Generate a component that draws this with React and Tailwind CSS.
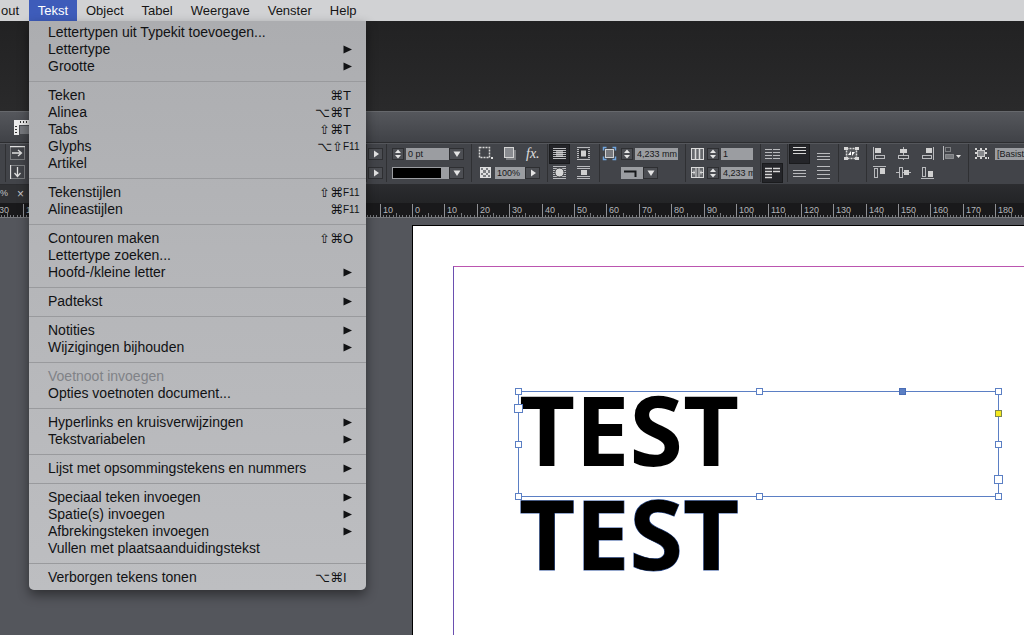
import React from 'react';

const MENUS_AFTER = ['Object', 'Tabel', 'Weergave', 'Venster', 'Help'];

// sub: opent een submenu, mods + keyName: sneltoets
const MENU_GROUPS = [
  [
    { label: 'Lettertypen uit Typekit toevoegen...' },
    { label: 'Lettertype', sub: true },
    { label: 'Grootte', sub: true },
  ],
  [
    { label: 'Teken', mods: '⌘', keyName: 'T' },
    { label: 'Alinea', mods: '⌥⌘', keyName: 'T' },
    { label: 'Tabs', mods: '⇧⌘', keyName: 'T' },
    { label: 'Glyphs', mods: '⌥⇧', keyName: 'F11' },
    { label: 'Artikel' },
  ],
  [
    { label: 'Tekenstijlen', mods: '⇧⌘', keyName: 'F11' },
    { label: 'Alineastijlen', mods: '⌘', keyName: 'F11' },
  ],
  [
    { label: 'Contouren maken', mods: '⇧⌘', keyName: 'O' },
    { label: 'Lettertype zoeken...' },
    { label: 'Hoofd-/kleine letter', sub: true },
  ],
  [{ label: 'Padtekst', sub: true }],
  [
    { label: 'Notities', sub: true },
    { label: 'Wijzigingen bijhouden', sub: true },
  ],
  [
    { label: 'Voetnoot invoegen', disabled: true },
    { label: 'Opties voetnoten document...' },
  ],
  [
    { label: 'Hyperlinks en kruisverwijzingen', sub: true },
    { label: 'Tekstvariabelen', sub: true },
  ],
  [{ label: 'Lijst met opsommingstekens en nummers', sub: true }],
  [
    { label: 'Speciaal teken invoegen', sub: true },
    { label: 'Spatie(s) invoegen', sub: true },
    { label: 'Afbrekingsteken invoegen', sub: true },
    { label: 'Vullen met plaatsaanduidingstekst' },
  ],
  [{ label: 'Verborgen tekens tonen', mods: '⌥⌘', keyName: 'I' }],
];

const MenuItem = ({ item }) => (
  <button
    type="button"
    role="menuitem"
    disabled={item.disabled}
    className="flex h-[17px] w-full items-center pl-[19px] pr-[7px] text-left text-[14px] leading-[17px] text-[#111214] disabled:text-[#808287]"
  >
    <span className="flex-1 whitespace-nowrap">{item.label}</span>
    {item.mods && (
      <span className="font-['DejaVu_Sans',sans-serif] text-[13px]">{item.mods}</span>
    )}
    {item.keyName && (
      <span className={item.keyName === 'F11' ? 'w-4 text-[10px]' : 'w-4 text-[13px]'}>{item.keyName}</span>
    )}
    {item.sub && (
      <svg width="17" height="9" viewBox="0 0 17 9" aria-hidden="true">
        <path d="M1.500 .5 L10 4.500 L1.500 8.500Z" fill="#111214" />
      </svg>
    )}
  </button>
);

const TextMenu = () => (
  <div
    role="menu"
    aria-label="Tekst"
    className="absolute left-0 top-full z-10 w-[337px] rounded-b-[5px] bg-linear-to-b from-[#acadb0] via-[#b4b5b8] via-40% to-[#bdbec1] pb-1 pt-[3px] shadow-[0_5px_12px_rgba(0,0,0,0.45)]"
  >
    {MENU_GROUPS.map((group, i) => (
      <React.Fragment key={group[0].label}>
        {i > 0 && (
          <div role="separator" className="flex h-3 items-center">
            <div className="h-px w-full bg-[#999a9d]" />
          </div>
        )}
        {group.map((item) => (
          <MenuItem key={item.label} item={item} />
        ))}
      </React.Fragment>
    ))}
  </div>
);

const MenuBar = () => (
  <nav className="flex h-[21px] shrink-0 bg-[#d1d2d4] text-[13px] leading-[21px] text-[#151515]">
    <button type="button" className="w-[29px] shrink-0 pl-px text-left">out</button>
    <div className="relative shrink-0">
      <button type="button" aria-haspopup="menu" aria-expanded="true" className="h-[21px] w-12 bg-[#3e5cba] text-center text-white">
        Tekst
      </button>
      <TextMenu />
    </div>
    {MENUS_AFTER.map((name) => (
      <button key={name} type="button" className="px-[9px]">{name}</button>
    ))}
  </nav>
);

/* ---- iconen van het regelpaneel ---- */

const C = '#b9babd';

const ICONS = {
  indentRight: (
    <>
      <rect x=".5" y=".5" width="14" height="13" fill="none" stroke={C} strokeDasharray="1 1" />
      <path d="M0 .5H15M2 7H11M8 4L11.500 7L8 10" fill="none" stroke="#e0e0e0" strokeWidth="1.300" />
    </>
  ),
  indentDown: (
    <>
      <rect x=".5" y=".5" width="14" height="13" fill="none" stroke={C} strokeDasharray="1 1" />
      <path d="M.5 0V14M7.500 2V11M4.500 8L7.500 11.500L10.500 8" fill="none" stroke="#e0e0e0" strokeWidth="1.300" />
    </>
  ),
  frame: (
    <>
      <rect x="1.500" y="1.500" width="10" height="10" fill="none" stroke="#d8d8d8" strokeDasharray="2 1" strokeWidth="1.500" />
      <rect x="13" y="11" width="2" height="2" fill="#e0e0e0" />
    </>
  ),
  shadow: (
    <>
      <rect x="4" y="4" width="10" height="10" fill="#7d7f83" />
      <rect x="2.500" y="1.500" width="9" height="10" fill="#898b90" stroke="#d5d5d5" />
    </>
  ),
  checker: (
    <>
      <rect x="2" y="2" width="11" height="11" fill="#dededf" />
      <path d="M3 3h2v2h-2zM8 3h2v2h-2zM5 5h3v3h-3zM10 5h2v3h-2zM3 8h2v2h-2zM8 8h2v2h-2zM5 10h3v2h-3zM10 10h2v2h-2z" fill="#7c7e82" />
    </>
  ),
  wrapNone: (
    <>
      <path d="M1 2.500H14M1 4.500H14M1 6.500H14M1 8.500H14M1 10.500H14M1 12.500H14" stroke={C} />
      <rect x="4" y="4" width="7" height="7" fill="#d5d5d5" fillOpacity=".6" />
    </>
  ),
  wrapBox: (
    <>
      <path d="M1 1.500H14M1 3.500H14M1 5.500H14M1 7.500H14M1 9.500H14M1 11.500H14M1 13.500H14" stroke={C} />
      <rect x="3" y="3" width="9" height="9" fill="#2f3135" />
      <rect x="5" y="4.500" width="5" height="6" fill="#d0d0d0" />
    </>
  ),
  wrapShape: (
    <>
      <path d="M1 1.500H14M1 3.500H14M1 5.500H14M1 7.500H14M1 9.500H14M1 11.500H14M1 13.500H14" stroke={C} />
      <circle cx="7.500" cy="7.500" r="4.500" fill="#d6d6d6" stroke="#3f4145" />
    </>
  ),
  wrapJump: (
    <>
      <path d="M1 1.500H14M1 3.500H14M1 11.500H14M1 13.500H14" stroke={C} />
      <rect x="5" y="5" width="6" height="5" fill="#d0d0d0" />
    </>
  ),
  corners: (
    <>
      <rect x="3.500" y="3.500" width="8" height="8" fill="#77797e" stroke="#d0d0d0" />
      <path d="M1.500 4.500V1.500H4.500M10.500 1.500h3V4.500M1.500 10.500v3H4.500M13.500 10.500v3H10.500" fill="none" stroke="#6fa5e0" strokeWidth="1.500" />
    </>
  ),
  columns: (
    <>
      <rect x="1.500" y="2.500" width="12" height="11" fill="#66686c" stroke="#dadada" />
      <path d="M5.500 3V13M9.500 3V13" stroke="#dadada" strokeWidth="1.500" />
    </>
  ),
  gutter: (
    <>
      <rect x="1.500" y="2.500" width="12" height="10" fill="#66686c" stroke="#dadada" />
      <path d="M6 2V13M9 2V13M2 7.500H5M10 7.500H13M4 5.500V9.500M11 5.500V9.500" stroke="#dadada" />
    </>
  ),
  twoCols: <path d="M0 3.500H7M0 6.500H7M0 9.500H7M0 12.500H7M8 3.500H15M8 6.500H15M8 9.500H15M8 12.500H15" stroke={C} />,
  balance: <path d="M0 3.500H7M0 6.500H7M0 9.500H7M0 12.500H7M8 3.500H15M8 6.500H15" stroke="#d6d6d6" strokeWidth="1.300" />,
  top: <path d="M1 1.500H14M1 4.500H14M1 7.500H14" stroke="#d6d6d6" />,
  bottom: <path d="M1 7.500H14M1 10.500H14M1 13.500H14" stroke={C} />,
  middle: <path d="M1 5.500H14M1 8.500H14M1 11.500H14" stroke={C} />,
  justify: <path d="M1 1.500H14M1 5.500H14M1 9.500H14M1 13.500H14" stroke={C} />,
  fit: (
    <>
      <rect x="2.500" y="2.500" width="10" height="10" fill="#55575b" stroke="#d8d8d8" strokeWidth="1.500" strokeDasharray="2 1" />
      <path d="M0 1h4v3h-4zM11 1h4v3h-4zM0 11h4v3h-4zM11 11h4v3h-4z" fill="#d8d8d8" />
      <path d="M4 9L7 5V9ZM11 6L8 10V6Z" fill="#fff" />
    </>
  ),
  alignL: (
    <>
      <path d="M1.500 1V14" stroke={C} />
      <rect x="3" y="2" width="6" height="5" fill="#d0d0d0" />
      <rect x="3.500" y="9.500" width="9" height="3" fill="none" stroke={C} />
    </>
  ),
  alignC: (
    <>
      <path d="M7.500 1V14" stroke={C} />
      <rect x="4" y="3" width="7" height="4" fill="#d0d0d0" />
      <rect x="2.500" y="9.500" width="10" height="3" fill="#3f4145" stroke={C} />
    </>
  ),
  alignR: (
    <>
      <path d="M13.500 1V14" stroke={C} />
      <rect x="6" y="2" width="6" height="5" fill="#d0d0d0" />
      <rect x="2.500" y="9.500" width="9" height="3" fill="none" stroke={C} />
    </>
  ),
  alignTo: (
    <>
      <path d="M1.500 0V14" stroke={C} />
      <rect x="3.500" y="1.500" width="5" height="4" fill="none" stroke={C} strokeDasharray="1 1" />
      <rect x="3.500" y="8.500" width="8" height="4" fill="#77797d" stroke={C} strokeDasharray="1 1" />
      <path d="M14 9H19L16.500 12Z" fill="#e5e5e5" />
    </>
  ),
  alignT: (
    <>
      <path d="M1 1.500H14" stroke={C} />
      <rect x="2.500" y="3.500" width="3" height="9" fill="none" stroke={C} />
      <rect x="8" y="3" width="5" height="6" fill="#d0d0d0" />
    </>
  ),
  alignM: (
    <>
      <path d="M0 7.500H15" stroke={C} />
      <rect x="3.500" y="2.500" width="3" height="10" fill="#3f4145" stroke={C} />
      <rect x="8" y="5" width="5" height="5" fill="#d0d0d0" />
    </>
  ),
  alignB: (
    <>
      <path d="M1 13.500H14" stroke={C} />
      <rect x="2.500" y="2.500" width="3" height="9" fill="none" stroke={C} />
      <rect x="8" y="6" width="5" height="6" fill="#d0d0d0" />
    </>
  ),
  objectStyle: (
    <>
      <rect x="3.500" y="4.500" width="7" height="6" fill="#85878b" stroke="#ccc" />
      <path d="M1 2h2v2h-2zM6 2h2v2h-2zM11 2h2v2h-2zM1 6h2v2h-2zM11 6h2v2h-2zM1 11h2v2h-2zM6 11h2v2h-2zM11 11h2v2h-2z" fill="#d5d5d5" />
      <rect x="14" y="11" width="1" height="2" fill="#e0e0e0" />
    </>
  ),
};

const Tool = ({ icon, label, active, wide }) => (
  <button
    type="button"
    aria-label={label}
    className={`flex h-[18px] shrink-0 items-center justify-center ${wide ? 'w-5' : 'w-[19px]'} ${active ? 'bg-[#242529] outline outline-[#1a1b1d]' : ''}`}
  >
    <svg width={wide ? 20 : 15} height="15" viewBox={wide ? '0 0 20 15' : '0 0 15 15'}>
      {ICONS[icon]}
    </svg>
  </button>
);

const ArrowButton = ({ dir, label }) => (
  <button type="button" aria-label={label} className="flex h-3 w-[15px] shrink-0 items-center justify-center border border-[#2e2f32] bg-[#4c4e53]">
    <svg width="8" height="8" viewBox="0 0 8 8">
      <path d={dir === 'down' ? 'M.5 1.500H7.500L4 7Z' : 'M2 .5L7 4L2 7.500Z'} fill="#e4e4e4" />
    </svg>
  </button>
);

const Spinner = ({ label }) => (
  <button type="button" aria-label={label} className="mr-0.5 flex h-3 w-3 shrink-0 items-center justify-center border border-[#2e2f32] bg-[#4c4e53]">
    <svg width="8" height="10" viewBox="0 0 8 10">
      <path d="M1 4L4 .5L7 4ZM1 6L4 9.500L7 6Z" fill="#e4e4e4" />
    </svg>
  </button>
);

const Field = ({ label, value, className }) => (
  <input
    aria-label={label}
    defaultValue={value}
    className={`h-3 shrink-0 bg-[#9b9da1] pl-0.5 text-[9px] leading-3 text-[#17181a] ${className}`}
  />
);

const Group = ({ className, children }) => (
  <div className={`flex h-[38px] shrink-0 flex-col border-l border-[#2f3033] ${className}`}>
    {children}
  </div>
);

const Row = ({ className = '', children }) => (
  <div className={`flex h-[19px] items-center ${className}`}>{children}</div>
);

const ControlPanel = () => (
  <div className="flex h-[43px] shrink-0 overflow-hidden border-y border-[#2c2d30] bg-[#424449] pt-px shadow-[inset_0_1px_0_#55575c]">
    <Group className="ml-[5px] w-[361px] pl-0.5">
      <Row><Tool icon="indentRight" label="Inspringing" /></Row>
      <Row><Tool icon="indentDown" label="Afstand" /></Row>
    </Group>
    <Group className="w-5 pl-px">
      <Row><ArrowButton label="Meer X" /></Row>
      <Row><ArrowButton label="Meer Y" /></Row>
    </Group>
    <Group className="w-[85px] pl-[5px]">
      <Row>
        <Spinner label="Lijndikte wijzigen" />
        <Field label="Lijndikte" value="0 pt" className="w-[43px]" />
        <ArrowButton dir="down" label="Lijndikte kiezen" />
      </Row>
      <Row>
        <button type="button" aria-label="Lijntype" className="h-3 w-[57px] shrink-0 border border-[#9b9da1] bg-black [border-right-width:8px]" />
        <ArrowButton dir="down" label="Lijntype kiezen" />
      </Row>
    </Group>
    <Group className="w-[76px] pl-1">
      <Row className="gap-[5px]">
        <Tool icon="frame" label="Effecten toepassen op" />
        <Tool icon="shadow" label="Slagschaduw" />
        <button type="button" className="pl-0.5 font-['Liberation_Serif',serif] text-[14px] leading-[18px] italic text-[#e0e0e0]">fx.</button>
      </Row>
      <Row>
        <Tool icon="checker" label="Dekking" />
        <Field label="Dekking in procenten" value="100%" className="w-[30px]" />
        <ArrowButton label="Dekking kiezen" />
      </Row>
    </Group>
    <Group className="w-[52px] pl-0.5">
      <Row className="gap-[5px]">
        <Tool icon="wrapNone" label="Geen tekstomloop" active />
        <Tool icon="wrapBox" label="Omloop om kader" />
      </Row>
      <Row className="gap-[5px]">
        <Tool icon="wrapShape" label="Omloop om vorm" />
        <Tool icon="wrapJump" label="Object overslaan" />
      </Row>
    </Group>
    <Group className="w-[86px]">
      <Row>
        <Tool icon="corners" label="Hoekopties" />
        <span className="w-0.5" />
        <Spinner label="Hoekgrootte wijzigen" />
        <Field label="Hoekgrootte" value="4,233 mm" className="w-[43px]" />
      </Row>
      <Row className="pl-[21px]">
        <button type="button" aria-label="Hoekvorm" className="flex h-3 w-[22px] shrink-0 items-center bg-[#9b9da1]">
          <svg width="20" height="10" viewBox="0 0 20 10">
            <path d="M3 3.500H14.500V9" fill="none" stroke="#17181a" strokeWidth="2" />
          </svg>
        </button>
        <ArrowButton dir="down" label="Hoekvorm kiezen" />
      </Row>
    </Group>
    <Group className="w-[75px] pl-0.5">
      <Row>
        <Tool icon="columns" label="Kolommen" />
        <Spinner label="Aantal kolommen wijzigen" />
        <Field label="Aantal kolommen" value="1" className="w-8" />
      </Row>
      <Row>
        <Tool icon="gutter" label="Tussenruimte" />
        <Spinner label="Tussenruimte wijzigen" />
        <Field label="Breedte tussenruimte" value="4,233 mm" className="w-8" />
      </Row>
    </Group>
    <Group className="w-[27px] pl-0.5">
      <Row><Tool icon="twoCols" label="Kolommen niet uitbalanceren" /></Row>
      <Row><Tool icon="balance" label="Kolommen uitbalanceren" active /></Row>
    </Group>
    <Group className="w-[51px] pl-0.5">
      <Row className="gap-[5px]">
        <Tool icon="top" label="Boven uitlijnen" active />
        <Tool icon="bottom" label="Onder uitlijnen" />
      </Row>
      <Row className="gap-[5px]">
        <Tool icon="middle" label="Centreren" />
        <Tool icon="justify" label="Verticaal uitvullen" />
      </Row>
    </Group>
    <Group className="w-7 pl-[3px]">
      <Row><Tool icon="fit" label="Kader aanpassen aan inhoud" /></Row>
    </Group>
    <Group className="w-[102px] pl-[3px]">
      <Row className="gap-[5px]">
        <Tool icon="alignL" label="Links" />
        <Tool icon="alignC" label="Horizontaal midden" />
        <Tool icon="alignR" label="Rechts" />
        <Tool icon="alignTo" label="Uitlijnen op" wide />
      </Row>
      <Row className="gap-[5px]">
        <Tool icon="alignT" label="Boven" />
        <Tool icon="alignM" label="Verticaal midden" />
        <Tool icon="alignB" label="Onder" />
      </Row>
    </Group>
    <Group className="flex-1 pl-[3px]">
      <Row>
        <Tool icon="objectStyle" label="Objectstijl" />
        <span className="w-1" />
        <Field label="Naam objectstijl" value="[Basistekstkader]" className="w-[90px]" />
      </Row>
    </Group>
  </div>
);

/* ---- liniaal: 10 mm is 32,4 px, nulpunt op de paginarand ---- */

const MM = 3.24;
const ORIGIN = 412;

const Ruler = () => {
  const ticks = [];
  const last = Math.floor((window.innerWidth - ORIGIN) / MM);
  for (let mm = -130; mm <= last; mm += 1) {
    const x = Math.round(ORIGIN + mm * MM);
    const major = mm % 10 === 0;
    ticks.push(
      <path key={mm} d={`M${x + 0.5} ${major ? 1 : mm % 5 === 0 ? 10 : 12}V14`} stroke={major ? '#8f9094' : '#77797d'} />
    );
    if (major) {
      ticks.push(
        <text key={`t${mm}`} x={x + 3} y="10" fontSize="9" fill="#b4b5b8">{Math.abs(mm)}</text>
      );
    }
  }
  return (
    <svg className="block h-[15px] w-full shrink-0 border-b border-[#77797d] bg-[#19191b]" aria-label="Liniaal">
      {ticks}
    </svg>
  );
};

/* ---- document ---- */

const BLUE = '#5b7fc4';

const HANDLES = [
  [0, 0], [241, 0], [480, 0],
  [0, 53], [480, 53],
  [0, 105], [241, 105], [480, 105],
];

const FrameSelection = () => (
  <svg className="absolute left-[100px] top-[160px]" width="492" height="117" viewBox="-5.5 -5.5 492 117" aria-hidden="true">
    <rect x="0" y="0" width="480" height="105" fill="none" stroke={BLUE} />
    {HANDLES.map(([x, y]) => (
      <rect key={`${x}-${y}`} x={x - 3} y={y - 3} width="6" height="6" fill="#fff" stroke={BLUE} />
    ))}
    {/* tekstpoorten in en uit */}
    <rect x="-4" y="13" width="8" height="8" fill="#fff" stroke={BLUE} />
    <rect x="476" y="84" width="8" height="8" fill="#fff" stroke={BLUE} />
    <rect x="381" y="-3" width="6" height="6" fill={BLUE} stroke="#4a6db5" />
    <rect x="477" y="19" width="6" height="6" fill="#f5e91d" stroke="#7d8650" />
  </svg>
);

const Document = () => (
  <main className="flex flex-1 overflow-hidden bg-[#54565c] pl-[412px] pt-[7px]">
    <div className="relative flex flex-1 border-l border-t border-black bg-white pl-10 pt-10">
      <div className="flex-1 border-l border-t border-l-[#6a4fb0] border-t-[#bb55b0]" />
      <div className="absolute left-[106px] top-[150px] font-['Open_Sans',sans-serif] text-[97px] font-bold leading-[104px] text-black">
        <p>TEST</p>
        <p className="[-webkit-text-stroke:1px_#31549c] [paint-order:stroke_fill]">TEST</p>
      </div>
      <FrameSelection />
    </div>
  </main>
);

const App = () => (
  <div className="flex min-h-screen flex-col overflow-hidden bg-[#262627] font-['Liberation_Sans',Arial,sans-serif]">
    <MenuBar />
    <div className="h-[90px] shrink-0 bg-linear-to-b from-[#222223] to-[#2a2a2b]" />
    <header className="flex h-[31px] shrink-0 items-center border-t border-[#66686c] bg-linear-to-b from-[#55575c] to-[#404247] pl-[14px]">
      <button type="button" aria-label="Weergaveopties">
        <svg width="20" height="15" viewBox="0 0 20 15">
          <path d="M0 0H20V5H5V15H0Z" fill="#ececec" />
          <path d="M6.500 1V3M9.500 1V3M12.500 1V3M15.500 1V3M1 6.500H3M1 9.500H3M1 12.500H3" stroke="#333" />
          <rect x="6" y="6" width="14" height="8" fill="#77797e" />
        </svg>
      </button>
    </header>
    <ControlPanel />
    <div className="flex h-[18px] shrink-0 items-center bg-linear-to-b from-[#2b2c2f] to-[#232426]">
      <div className="flex h-full w-[29px] items-center justify-between bg-[#303134] pr-[5px] text-[9px] text-[#c4c5c8]">
        <span>%</span>
        <button type="button" aria-label="Document sluiten" className="text-[12px] leading-3">×</button>
      </div>
    </div>
    <Ruler />
    <Document />
  </div>
);

export default App;
